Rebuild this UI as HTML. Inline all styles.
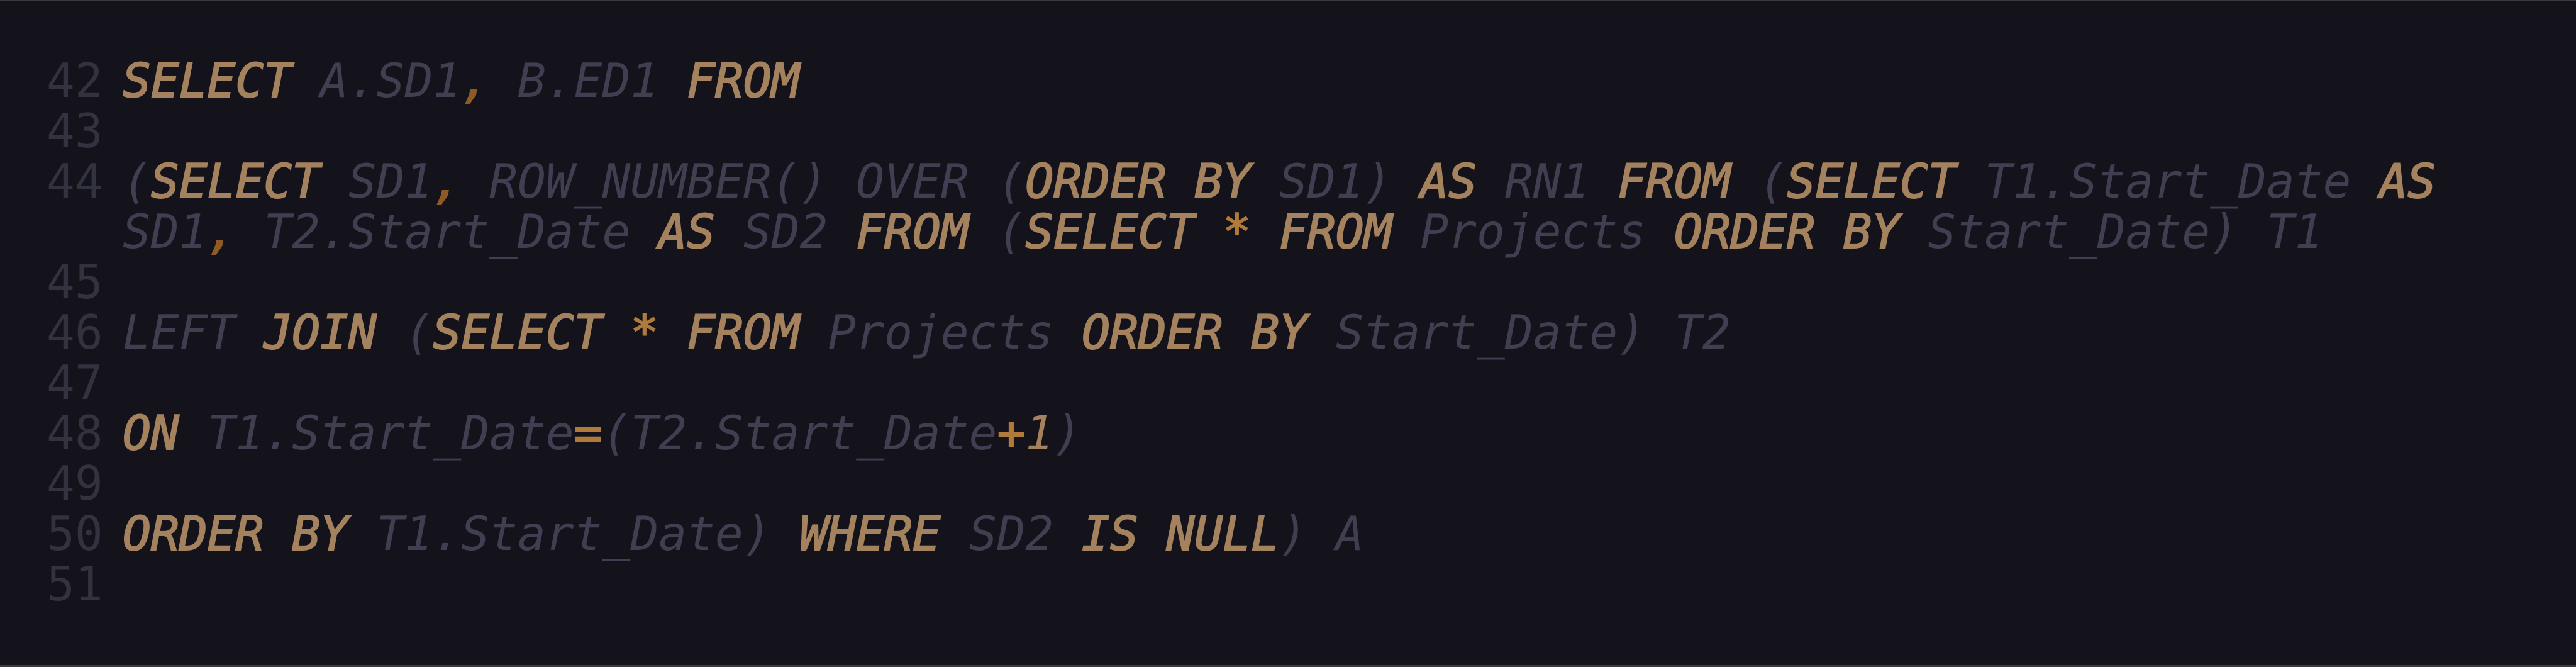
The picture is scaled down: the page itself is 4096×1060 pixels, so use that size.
<!DOCTYPE html>
<html><head><meta charset="utf-8"><style>
html,body{margin:0;padding:0;}
body{width:4096px;height:1060px;background:#14131c;overflow:hidden;position:relative;border-top:2px solid #3a3a3f;border-bottom:3px solid #3a3a3f;box-sizing:border-box;}
.l{position:absolute;left:0;height:80px;line-height:80px;font-family:"DejaVu Sans Mono","Liberation Mono",monospace;font-size:74.5px;white-space:pre;}
.n{position:absolute;left:74px;color:#33323f;font-style:normal;}
.c{position:absolute;left:195px;font-style:oblique;color:#403e50;}
.k{color:#a5825e;-webkit-text-stroke:2px #a5825e;}
.p{color:#8e5b27;-webkit-text-stroke:2px #8e5b27;}
.o{color:#b07a3a;-webkit-text-stroke:2px #b07a3a;}
.num{color:#a5825e;}
</style></head><body>
<div class="l" style="top:87px"><span class="n">42</span><span class="c"><span class="k">SELECT</span> A.SD1<span class="p">,</span> B.ED1 <span class="k">FROM</span></span></div>
<div class="l" style="top:167px"><span class="n">43</span></div>
<div class="l" style="top:247px"><span class="n">44</span><span class="c">(<span class="k">SELECT</span> SD1<span class="p">,</span> ROW_NUMBER() OVER (<span class="k">ORDER BY</span> SD1) <span class="k">AS</span> RN1 <span class="k">FROM</span> (<span class="k">SELECT</span> T1.Start_Date <span class="k">AS</span></span></div>
<div class="l" style="top:327px"><span class="c">SD1<span class="p">,</span> T2.Start_Date <span class="k">AS</span> SD2 <span class="k">FROM</span> (<span class="k">SELECT</span> <span class="o">*</span> <span class="k">FROM</span> Projects <span class="k">ORDER BY</span> Start_Date) T1</span></div>
<div class="l" style="top:407px"><span class="n">45</span></div>
<div class="l" style="top:487px"><span class="n">46</span><span class="c">LEFT <span class="k">JOIN</span> (<span class="k">SELECT</span> <span class="o">*</span> <span class="k">FROM</span> Projects <span class="k">ORDER BY</span> Start_Date) T2</span></div>
<div class="l" style="top:567px"><span class="n">47</span></div>
<div class="l" style="top:647px"><span class="n">48</span><span class="c"><span class="k">ON</span> T1.Start_Date<span class="o">=</span>(T2.Start_Date<span class="o">+</span><span class="num">1</span>)</span></div>
<div class="l" style="top:727px"><span class="n">49</span></div>
<div class="l" style="top:807px"><span class="n">50</span><span class="c"><span class="k">ORDER BY</span> T1.Start_Date) <span class="k">WHERE</span> SD2 <span class="k">IS NULL</span>) A</span></div>
<div class="l" style="top:887px"><span class="n">51</span></div>
</body></html>
